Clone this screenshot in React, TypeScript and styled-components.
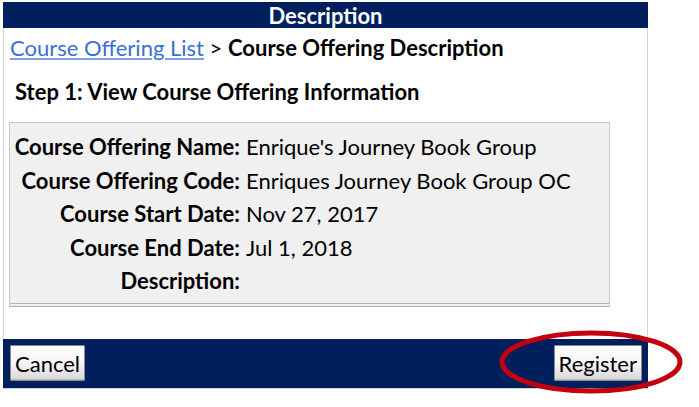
import React from "react";
import styled, { createGlobalStyle } from "styled-components";

const Global = createGlobalStyle`
  html, body { margin: 0; padding: 0; background: #fff; }
  body { font-family: Lato, "Open Sans", "Liberation Sans", sans-serif; color: #000; }
`;

const Page = styled.div`
  position: relative;
  width: 699px;
  height: 407px;
  padding: 2px 0 0 3px;
  box-sizing: border-box;
`;

const Panel = styled.div`
  width: 645px;
  display: flex;
  flex-direction: column;
`;

const Header = styled.div`
  height: 26px;
  background: #001f5c;
  color: #fff;
  font-weight: 700;
  font-size: 22px;
  line-height: 27px;
  text-align: center;
`;

const Content = styled.div`
  border-left: 1px solid #d4d4d4;
  border-right: 1px solid #d4d4d4;
  padding: 7px 0 32px 0;
  display: flex;
  flex-direction: column;
`;

const Breadcrumb = styled.div`
  font-size: 22px;
  line-height: 26px;
  padding-left: 6px;
`;

const Link = styled.a`
  color: #3b6fd6;
  text-decoration: underline;
  text-decoration-color: #7f9fe0;
  text-underline-offset: 2px;
  cursor: pointer;
`;

const Current = styled.span`
  font-weight: 700;
`;

const Step = styled.h2`
  margin: 18px 0 0 0;
  padding-left: 11px;
  font-size: 22px;
  line-height: 26px;
  font-weight: 700;
`;

const InfoBox = styled.div`
  margin: 17px 0 0 5px;
  width: 601px;
  box-sizing: border-box;
  background: #f0f0f0;
  border: 1px solid #c8c8c8;
  border-bottom-color: #b0b0b0;
  padding: 7px 0 2px 0;
`;

const InfoGrid = styled.div`
  display: grid;
  grid-template-columns: 230px 1fr;
  column-gap: 6px;
  border-bottom: 1px solid #b4b4b4;
  padding-bottom: 5px;
`;

const Label = styled.div`
  font-size: 22px;
  line-height: 33.5px;
  font-weight: 700;
  text-align: right;
  white-space: nowrap;
`;

const Value = styled.div`
  font-size: 22px;
  line-height: 33.5px;
  white-space: nowrap;
`;

const Footer = styled.div`
  height: 49px;
  background: #001f5c;
  border-bottom: 1px solid #d0d0d0;
  box-sizing: content-box;
  display: flex;
  align-items: center;
  justify-content: space-between;
  padding: 0 6px 0 7px;
`;

const Button = styled.button`
  height: 36px;
  padding: 0 4px;
  font-family: Lato, "Open Sans", "Liberation Sans", sans-serif;
  font-size: 22px;
  color: #000;
  background: linear-gradient(#ffffff 0%, #f4f4f4 55%, #d6d6d6 100%);
  border: 1px solid #8a8a8a;
  border-radius: 1px;
  box-shadow: inset 0 -1px 0 #bdbdbd;
  cursor: pointer;
`;

const Highlight = styled.svg`
  position: absolute;
  left: 498px;
  top: 330px;
  pointer-events: none;
`;

const rows: [string, string][] = [
  ["Course Offering Name:", "Enrique's Journey Book Group"],
  ["Course Offering Code:", "Enriques Journey Book Group OC"],
  ["Course Start Date:", "Nov 27, 2017"],
  ["Course End Date:", "Jul 1, 2018"],
  ["Description:", ""],
];

export default function App() {
  return (
    <Page>
      <Global />
      <Panel>
        <Header>Description</Header>
        <Content>
          <Breadcrumb>
            <Link>Course Offering List</Link> &gt; <Current>Course Offering Description</Current>
          </Breadcrumb>
          <Step>Step 1: View Course Offering Information</Step>
          <InfoBox>
            <InfoGrid>
              {rows.map(([l, v]) => (
                <React.Fragment key={l}>
                  <Label>{l}</Label>
                  <Value>{v}</Value>
                </React.Fragment>
              ))}
            </InfoGrid>
          </InfoBox>
        </Content>
        <Footer>
          <Button>Cancel</Button>
          <Button>Register</Button>
        </Footer>
      </Panel>
      <Highlight width="190" height="68" viewBox="0 0 190 68">
        <ellipse cx="93" cy="32" rx="89" ry="29" fill="none" stroke="#c20010" strokeWidth="5" />
      </Highlight>
    </Page>
  );
}
